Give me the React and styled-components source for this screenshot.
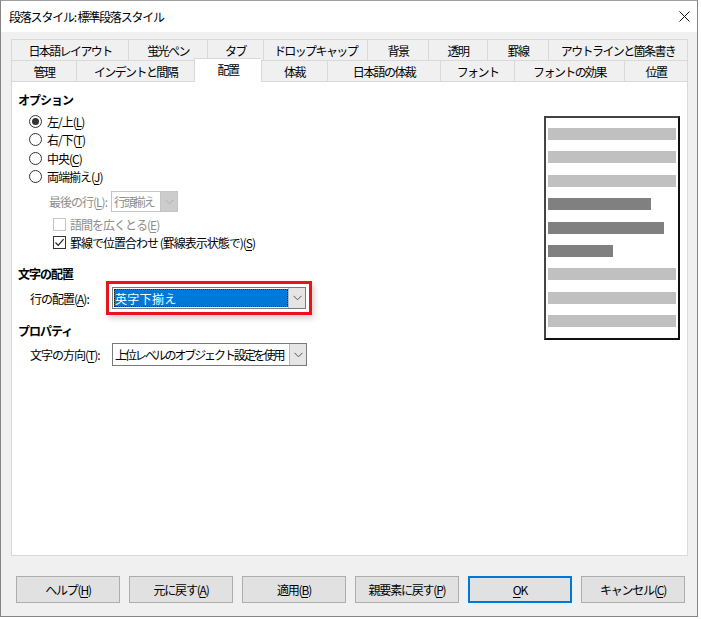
import styled, { createGlobalStyle } from "styled-components";

const GlobalStyle = createGlobalStyle`
  body {
    margin: 0;
    background: #ffffff;
    font-family: "Noto Sans CJK JP", "Noto Sans", sans-serif;
    font-size: 12px;
    letter-spacing: -1px;
    color: #000;
  }
`;

const TOP_TABS = [
  { label: "日本語レイアウト", w: 117 },
  { label: "蛍光ペン", w: 79 },
  { label: "タブ", w: 56 },
  { label: "ドロップキャップ", w: 104 },
  { label: "背景", w: 61 },
  { label: "透明", w: 59 },
  { label: "罫線", w: 61 },
  { label: "アウトラインと箇条書き", w: 140 },
];

const BOTTOM_TABS = [
  { label: "管理", w: 65 },
  { label: "インデントと間隔", w: 118 },
  { label: "配置", w: 67, active: true },
  { label: "体裁", w: 66 },
  { label: "日本語の体裁", w: 113 },
  { label: "フォント", w: 74 },
  { label: "フォントの効果", w: 110 },
  { label: "位置", w: 64 },
];

const PREVIEW_BARS = [
  { w: 128, dark: false },
  { w: 128, dark: false },
  { w: 128, dark: false },
  { w: 103, dark: true },
  { w: 116, dark: true },
  { w: 65, dark: true },
  { w: 128, dark: false },
  { w: 128, dark: false },
  { w: 128, dark: false },
];

const Chevron = ({ color = "#555" }) => (
  <svg width="9" height="6" viewBox="0 0 9 6">
    <path d="M0.5 0.8 L4.5 4.8 L8.5 0.8" fill="none" stroke={color} strokeWidth="1" />
  </svg>
);

const App = () => {
  return (
    <>
      <GlobalStyle />
      <Window>
        <TitleBar>
          <Title>段落スタイル: 標準段落スタイル</Title>
          <CloseBtn>
            <svg width="11" height="11" viewBox="0 0 11 11">
              <path d="M0.5 0.5 L10.5 10.5 M10.5 0.5 L0.5 10.5" stroke="#111" strokeWidth="1" />
            </svg>
          </CloseBtn>
        </TitleBar>
        <Body>
          <TabRow>
            {TOP_TABS.map((t) => (
              <Tab key={t.label} $w={t.w}>{t.label}</Tab>
            ))}
          </TabRow>
          <TabRow>
            {BOTTOM_TABS.map((t) => (
              <Tab key={t.label} $w={t.w} $active={t.active}>{t.label}</Tab>
            ))}
          </TabRow>
          <Panel>
            <LeftColumn>
              <SectionTitle>オプション</SectionTitle>
              <RadioGroup>
                <RadioRow>
                  <Radio $checked />
                  <span>左/上(<U>L</U>)</span>
                </RadioRow>
                <RadioRow>
                  <Radio />
                  <span>右/下(<U>T</U>)</span>
                </RadioRow>
                <RadioRow>
                  <Radio />
                  <span>中央(<U>C</U>)</span>
                </RadioRow>
                <RadioRow>
                  <Radio />
                  <span>両端揃え(<U>J</U>)</span>
                </RadioRow>
              </RadioGroup>
              <LastLineRow>
                <DisabledText>最後の行(<U>L</U>):</DisabledText>
                <Combo $w={67} $h={21} $disabled>
                  <ComboValue $disabled $tight>行頭揃え</ComboValue>
                  <ComboButton $disabled>
                    <Chevron color="#b0b0b0" />
                  </ComboButton>
                </Combo>
              </LastLineRow>
              <CheckRow $mt={3}>
                <CheckBox $disabled />
                <DisabledText>語間を広くとる(<U>E</U>)</DisabledText>
              </CheckRow>
              <CheckRow>
                <CheckBox>
                  <svg width="11" height="11" viewBox="0 0 11 11">
                    <path d="M1.5 5.5 L4.2 8.3 L9.6 2.2" fill="none" stroke="#222" strokeWidth="1.2" />
                  </svg>
                </CheckBox>
                <span>罫線で位置合わせ (罫線表示状態で)(<U>S</U>)</span>
              </CheckRow>

              <SectionTitle $mt={15}>文字の配置</SectionTitle>
              <FieldRow $mt={5}>
                <FieldLabel>行の配置(<U>A</U>):</FieldLabel>
                <Combo $w={194} $h={22} $highlight>
                  <ComboValue $selected>英字下揃え</ComboValue>
                  <ComboButton>
                    <Chevron />
                  </ComboButton>
                </Combo>
              </FieldRow>

              <SectionTitle $mt={14}>プロパティ</SectionTitle>
              <FieldRow $mt={4}>
                <FieldLabel>文字の方向(<U>T</U>):</FieldLabel>
                <Combo $w={195} $h={23}>
                  <ComboValue $tight>上位レベルのオブジェクト設定を使用</ComboValue>
                  <ComboButton>
                    <Chevron />
                  </ComboButton>
                </Combo>
              </FieldRow>
            </LeftColumn>
            <PreviewColumn>
              <PreviewBox>
                {PREVIEW_BARS.map((b, i) => (
                  <Bar key={i} $dark={b.dark} style={{ width: b.w }} />
                ))}
              </PreviewBox>
            </PreviewColumn>
          </Panel>
        </Body>
        <Footer>
          <Button>ヘルプ(<U>H</U>)</Button>
          <Button>元に戻す(<U>A</U>)</Button>
          <Button>適用(<U>B</U>)</Button>
          <Button>親要素に戻す(<U>P</U>)</Button>
          <Button $default><U>O</U>K</Button>
          <Button>キャンセル(<U>C</U>)</Button>
        </Footer>
      </Window>
    </>
  );
};

export default App;

const Window = styled.div`
  box-sizing: border-box;
  width: 698px;
  height: 617px;
  border: 1px solid #858585;
  border-top-color: #a0a0a0;
  background: #f0f0f0;
  display: flex;
  flex-direction: column;
`;

const TitleBar = styled.div`
  height: 31px;
  background: #ffffff;
  display: flex;
  align-items: center;
  justify-content: space-between;
  padding: 0 0 0 8px;
`;

const Title = styled.div`
  font-size: 12px;
  letter-spacing: -1.2px;
`;

const CloseBtn = styled.div`
  width: 26px;
  height: 31px;
  display: flex;
  align-items: center;
  justify-content: center;
`;

const Body = styled.div`
  padding: 7px 9px 0 10px;
  display: flex;
  flex-direction: column;
`;

const TabRow = styled.div`
  display: flex;
  height: 21px;
`;

const Tab = styled.div`
  box-sizing: border-box;
  width: ${(p) => p.$w}px;
  height: ${(p) => (p.$active ? 24 : 21)}px;
  margin-top: ${(p) => (p.$active ? -2 : 0)}px;
  border: 1px solid #d9d9d9;
  border-bottom: none;
  border-right: none;
  background: ${(p) => (p.$active ? "#ffffff" : "#f0f0f0")};
  position: relative;
  z-index: ${(p) => (p.$active ? 2 : 1)};
  display: flex;
  align-items: center;
  justify-content: center;
  padding-bottom: ${(p) => (p.$active ? 3 : 0)}px;
  white-space: nowrap;
  letter-spacing: -1.6px;

  &:last-child {
    border-right: 1px solid #d9d9d9;
  }
`;

const Panel = styled.div`
  box-sizing: border-box;
  height: 475px;
  background: #ffffff;
  border: 1px solid #d9d9d9;
  display: flex;
`;

const LeftColumn = styled.div`
  flex: 1;
  padding: 10px 0 0 6px;
  display: flex;
  flex-direction: column;
  align-items: flex-start;
`;

const SectionTitle = styled.div`
  font-weight: bold;
  line-height: 16px;
  margin-top: ${(p) => p.$mt || 0}px;
`;

const RadioGroup = styled.div`
  margin-top: 4px;
  padding-left: 11px;
  display: flex;
  flex-direction: column;
`;

const RadioRow = styled.div`
  height: 18.5px;
  display: flex;
  align-items: center;
  gap: 5px;
  white-space: nowrap;
`;

const Radio = styled.span`
  box-sizing: border-box;
  width: 13px;
  height: 13px;
  border-radius: 50%;
  border: 1px solid #333;
  background: #fff;
  display: flex;
  align-items: center;
  justify-content: center;

  &::after {
    content: "";
    width: 7px;
    height: 7px;
    border-radius: 50%;
    background: ${(p) => (p.$checked ? "#333" : "transparent")};
  }
`;

const U = styled.span`
  text-decoration: underline;
  text-underline-offset: 2px;
`;

const DisabledText = styled.span`
  color: #8d8d8d;
  white-space: nowrap;
`;

const LastLineRow = styled.div`
  margin-top: 5px;
  padding-left: 31px;
  display: flex;
  align-items: center;
  gap: 4px;
`;

const CheckRow = styled.div`
  margin-top: ${(p) => p.$mt || 0}px;
  height: 18px;
  padding-left: 35px;
  display: flex;
  align-items: center;
  gap: 4px;
  white-space: nowrap;
`;

const CheckBox = styled.span`
  box-sizing: border-box;
  width: 13px;
  height: 13px;
  border: 1px solid ${(p) => (p.$disabled ? "#c6c6c6" : "#333")};
  background: #fff;
  display: flex;
  align-items: center;
  justify-content: center;
`;

const FieldRow = styled.div`
  margin-top: ${(p) => p.$mt || 0}px;
  padding-left: 12px;
  display: flex;
  align-items: center;
`;

const FieldLabel = styled.span`
  width: 82px;
  white-space: nowrap;
`;

const Combo = styled.div`
  box-sizing: border-box;
  width: ${(p) => p.$w}px;
  height: ${(p) => p.$h}px;
  border: 1px solid ${(p) => (p.$disabled ? "#c4c4c4" : "#7a7a7a")};
  background: #fff;
  display: flex;
  padding: 1px 0 1px 1px;
  ${(p) =>
    p.$highlight &&
    `
    outline: 3px solid #e8141c;
    outline-offset: 3px;
    box-shadow: 0 0 0 6px #fff, 2px 3px 6px 6px rgba(0, 0, 0, 0.2);
  `}
`;

const ComboValue = styled.div`
  flex: 1;
  display: flex;
  align-items: center;
  padding-left: 1px;
  white-space: nowrap;
  overflow: hidden;
  letter-spacing: ${(p) => (p.$tight ? "-2.1px" : "0.3px")};
  color: ${(p) => (p.$disabled ? "#8d8d8d" : p.$selected ? "#fff" : "#000")};
  background: ${(p) => (p.$selected ? "#0078d7" : "transparent")};
  outline: ${(p) => (p.$selected ? "1px dotted #222" : "none")};
  outline-offset: -1px;
`;

const ComboButton = styled.div`
  width: 16px;
  flex-shrink: 0;
  margin-top: -1px;
  margin-bottom: -1px;
  border-left: 1px solid ${(p) => (p.$disabled ? "#c4c4c4" : "#b8b8b8")};
  background: ${(p) => (p.$disabled ? "#cccccc" : "#e5e5e5")};
  display: flex;
  align-items: center;
  justify-content: center;
`;

const PreviewColumn = styled.div`
  padding: 34px 7px 0 0;
`;

const PreviewBox = styled.div`
  box-sizing: border-box;
  width: 136px;
  height: 224px;
  border: 2px solid #111;
  border-left-color: #444;
  border-top-color: #444;
  padding: 10px 2px 0 2px;
  display: flex;
  flex-direction: column;
  gap: 11.4px;
`;

const Bar = styled.div`
  height: 12px;
  background: ${(p) => (p.$dark ? "#808080" : "#c0c0c0")};
`;

const Footer = styled.div`
  margin-top: 20px;
  padding-left: 15px;
  display: flex;
  gap: 9px;
`;

const Button = styled.div`
  box-sizing: border-box;
  width: 104px;
  height: 27px;
  background: #e1e1e1;
  border: ${(p) => (p.$default ? "2px solid #0078d7" : "1px solid #adadad")};
  display: flex;
  align-items: center;
  justify-content: center;
  white-space: nowrap;
  letter-spacing: -1.2px;
`;
